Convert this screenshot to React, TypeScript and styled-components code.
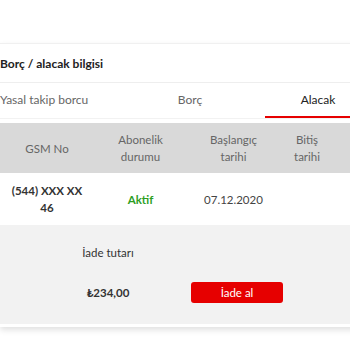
import React, { useState } from 'react';
import styled, { createGlobalStyle } from 'styled-components';

const GlobalStyle = createGlobalStyle`
  html, body {
    margin: 0;
    padding: 0;
    background: #ffffff;
    overflow: hidden;
  }
  body {
    font-family: Lato, "Open Sans", Arial, sans-serif;
    color: #333;
  }
`;

const Page = styled.div`
  width: 350px;
  height: 350px;
  padding-top: 43px;
  box-sizing: border-box;
  overflow: hidden;
`;

const Card = styled.section`
  width: 380px;
  background: #fff;
  border-top: 1px solid #f0f0f0;
  padding-bottom: 3px;
  box-shadow: 0 3px 6px rgba(0, 0, 0, 0.12);
`;

const Title = styled.h2`
  margin: 0;
  height: 38px;
  display: flex;
  align-items: center;
  font-size: 12px;
  font-weight: 700;
  color: #222;
  border-bottom: 1px solid #eeeeee;
`;

const Tabs = styled.div`
  display: flex;
  height: 35px;
  border-bottom: 1px solid #f2f2f2;
`;

const Tab = styled.button<{ $active?: boolean; $width: number; $align?: string; $offset?: number }>`
  all: unset;
  box-sizing: border-box;
  width: ${(p) => p.$width}px;
  margin-left: ${(p) => p.$offset ?? 0}px;
  display: flex;
  align-items: center;
  justify-content: ${(p) => p.$align ?? 'center'};
  font-family: Lato, "Open Sans", Arial, sans-serif;
  font-size: 12px;
  color: ${(p) => (p.$active ? '#222' : '#666')};
  border-bottom: 2px solid ${(p) => (p.$active ? '#e60000' : 'transparent')};
  cursor: pointer;
`;

const Table = styled.div`
  margin-top: 4px;
`;

const Grid = styled.div<{ $head?: boolean }>`
  display: grid;
  grid-template-columns: 94px 93px 93px 54px 1fr;
  align-items: center;
  height: ${(p) => (p.$head ? 50 : 52)}px;
  background: ${(p) => (p.$head ? '#d9d9d9' : '#fff')};
  color: ${(p) => (p.$head ? '#666' : '#444')};
  font-size: 11.5px;
  line-height: 17px;
  text-align: center;
`;

const Cell = styled.div<{ $bold?: boolean; $color?: string }>`
  display: flex;
  justify-content: center;
  font-weight: ${(p) => (p.$bold ? 700 : 400)};
  color: ${(p) => p.$color ?? 'inherit'};
`;

const Wrap = styled.span<{ $max?: number }>`
  max-width: ${(p) => p.$max ?? 66}px;
`;

const Refund = styled.div`
  background: #f2f2f2;
  padding: 20px 0 21px 60px;
  display: grid;
  grid-template-columns: 96px 92px;
  column-gap: 35px;
  row-gap: 21px;
  align-items: center;
`;

const Label = styled.div<{ $bold?: boolean }>`
  text-align: center;
  font-size: 11.5px;
  line-height: 16px;
  color: #333;
  font-weight: ${(p) => (p.$bold ? 700 : 400)};
`;

const RefundButton = styled.button`
  all: unset;
  box-sizing: border-box;
  width: 92px;
  height: 21px;
  border-radius: 3px;
  background: #e60000;
  color: #fff;
  font-family: Lato, "Open Sans", Arial, sans-serif;
  font-size: 11.5px;
  text-align: center;
  line-height: 21px;
  cursor: pointer;
`;

const tabs = [
  { key: 'yasal', label: 'Yasal takip borcu', width: 130, align: 'flex-start', offset: 0 },
  { key: 'borc', label: 'Borç', width: 120, align: 'center', offset: 0 },
  { key: 'alacak', label: 'Alacak', width: 106, align: 'center', offset: 15 },
];

const App: React.FC = () => {
  const [active, setActive] = useState('alacak');

  return (
    <Page>
      <GlobalStyle />
      <Card>
        <Title>Borç / alacak bilgisi</Title>
        <Tabs>
          {tabs.map((t) => (
            <Tab
              key={t.key}
              $width={t.width}
              $align={t.align}
              $offset={t.offset}
              $active={active === t.key}
              onClick={() => setActive(t.key)}
            >
              {t.label}
            </Tab>
          ))}
        </Tabs>
        <Table>
          <Grid $head>
            <Cell>GSM No</Cell>
            <Cell>
              <Wrap>Abonelik durumu</Wrap>
            </Cell>
            <Cell>
              <Wrap>Başlangıç tarihi</Wrap>
            </Cell>
            <Cell>
              <Wrap $max={36}>Bitiş tarihi</Wrap>
            </Cell>
            <Cell />
          </Grid>
          <Grid>
            <Cell $bold $color="#333">
              <Wrap $max={80}>(544) XXX XX 46</Wrap>
            </Cell>
            <Cell $bold $color="#2e9e1f">Aktif</Cell>
            <Cell>07.12.2020</Cell>
            <Cell />
            <Cell />
          </Grid>
        </Table>
        <Refund>
          <Label>İade tutarı</Label>
          <div />
          <Label $bold>₺234,00</Label>
          <RefundButton>İade al</RefundButton>
        </Refund>
      </Card>
    </Page>
  );
};

export default App;
